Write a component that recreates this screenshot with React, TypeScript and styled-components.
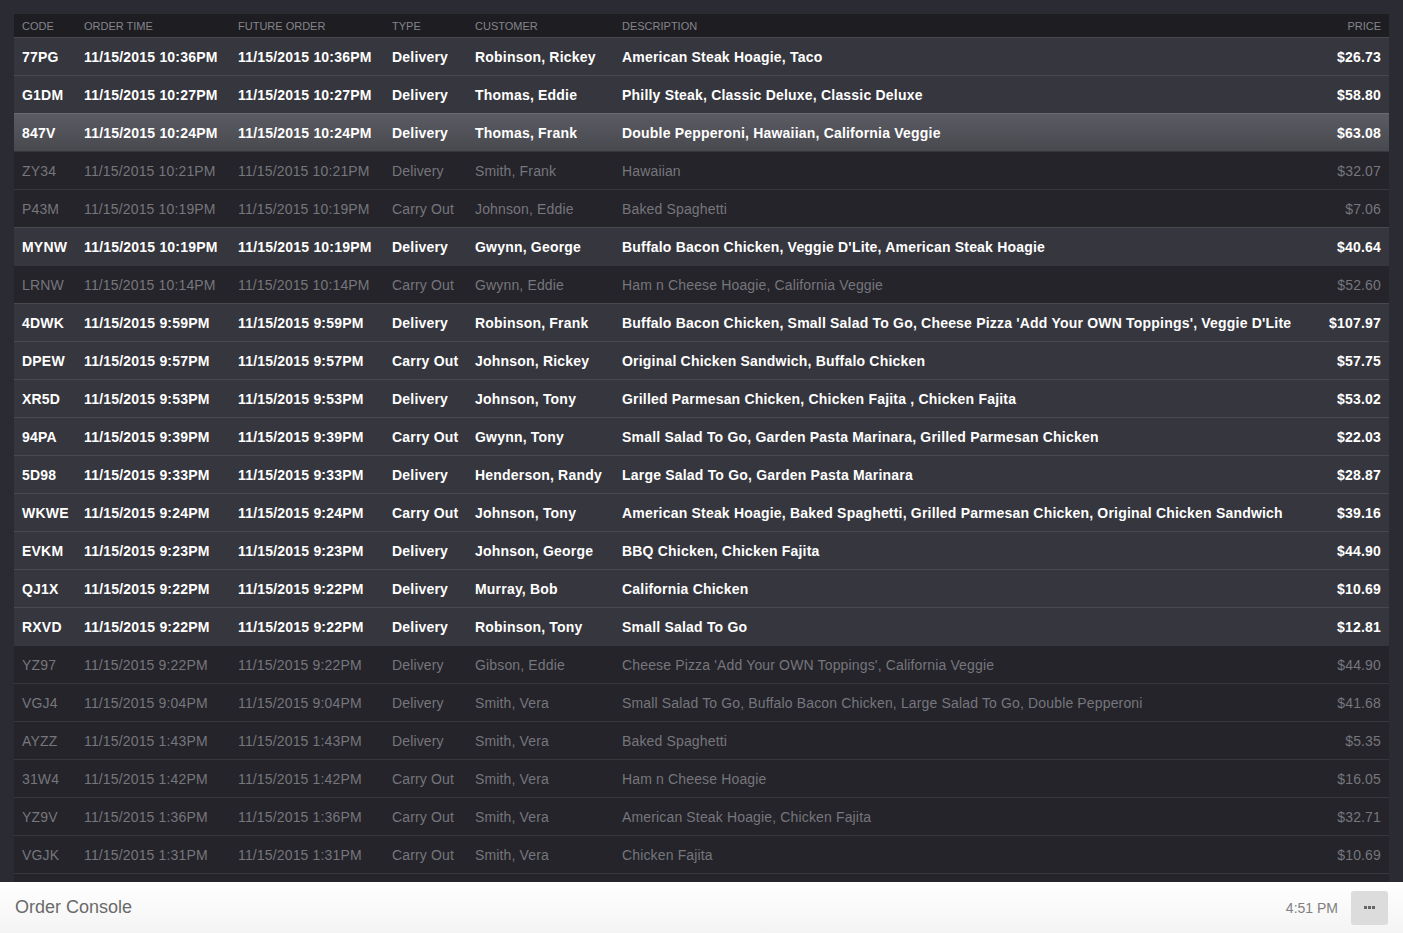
import React from "react";
import styled, { createGlobalStyle, css } from "styled-components";

const GlobalStyle = createGlobalStyle`
  html, body { margin: 0; padding: 0; background: #2b2b33; }
  body { font-family: "Liberation Sans", Arial, sans-serif; }
  * { box-sizing: border-box; }
`;

type Kind = "active" | "dim" | "selected";

interface Order {
  code: string;
  time: string;
  future: string;
  type: string;
  customer: string;
  desc: string;
  price: string;
  kind: Kind;
}

const orders: Order[] = [
  { code: "77PG", time: "11/15/2015 10:36PM", future: "11/15/2015 10:36PM", type: "Delivery", customer: "Robinson, Rickey", desc: "American Steak Hoagie, Taco", price: "$26.73", kind: "active" },
  { code: "G1DM", time: "11/15/2015 10:27PM", future: "11/15/2015 10:27PM", type: "Delivery", customer: "Thomas, Eddie", desc: "Philly Steak, Classic Deluxe, Classic Deluxe", price: "$58.80", kind: "active" },
  { code: "847V", time: "11/15/2015 10:24PM", future: "11/15/2015 10:24PM", type: "Delivery", customer: "Thomas, Frank", desc: "Double Pepperoni, Hawaiian, California Veggie", price: "$63.08", kind: "selected" },
  { code: "ZY34", time: "11/15/2015 10:21PM", future: "11/15/2015 10:21PM", type: "Delivery", customer: "Smith, Frank", desc: "Hawaiian", price: "$32.07", kind: "dim" },
  { code: "P43M", time: "11/15/2015 10:19PM", future: "11/15/2015 10:19PM", type: "Carry Out", customer: "Johnson, Eddie", desc: "Baked Spaghetti", price: "$7.06", kind: "dim" },
  { code: "MYNW", time: "11/15/2015 10:19PM", future: "11/15/2015 10:19PM", type: "Delivery", customer: "Gwynn, George", desc: "Buffalo Bacon Chicken, Veggie D'Lite, American Steak Hoagie", price: "$40.64", kind: "active" },
  { code: "LRNW", time: "11/15/2015 10:14PM", future: "11/15/2015 10:14PM", type: "Carry Out", customer: "Gwynn, Eddie", desc: "Ham n Cheese Hoagie, California Veggie", price: "$52.60", kind: "dim" },
  { code: "4DWK", time: "11/15/2015 9:59PM", future: "11/15/2015 9:59PM", type: "Delivery", customer: "Robinson, Frank", desc: "Buffalo Bacon Chicken, Small Salad To Go, Cheese Pizza 'Add Your OWN Toppings', Veggie D'Lite", price: "$107.97", kind: "active" },
  { code: "DPEW", time: "11/15/2015 9:57PM", future: "11/15/2015 9:57PM", type: "Carry Out", customer: "Johnson, Rickey", desc: "Original Chicken Sandwich, Buffalo Chicken", price: "$57.75", kind: "active" },
  { code: "XR5D", time: "11/15/2015 9:53PM", future: "11/15/2015 9:53PM", type: "Delivery", customer: "Johnson, Tony", desc: "Grilled Parmesan Chicken, Chicken Fajita , Chicken Fajita", price: "$53.02", kind: "active" },
  { code: "94PA", time: "11/15/2015 9:39PM", future: "11/15/2015 9:39PM", type: "Carry Out", customer: "Gwynn, Tony", desc: "Small Salad To Go, Garden Pasta Marinara, Grilled Parmesan Chicken", price: "$22.03", kind: "active" },
  { code: "5D98", time: "11/15/2015 9:33PM", future: "11/15/2015 9:33PM", type: "Delivery", customer: "Henderson, Randy", desc: "Large Salad To Go, Garden Pasta Marinara", price: "$28.87", kind: "active" },
  { code: "WKWE", time: "11/15/2015 9:24PM", future: "11/15/2015 9:24PM", type: "Carry Out", customer: "Johnson, Tony", desc: "American Steak Hoagie, Baked Spaghetti, Grilled Parmesan Chicken, Original Chicken Sandwich", price: "$39.16", kind: "active" },
  { code: "EVKM", time: "11/15/2015 9:23PM", future: "11/15/2015 9:23PM", type: "Delivery", customer: "Johnson, George", desc: "BBQ Chicken, Chicken Fajita", price: "$44.90", kind: "active" },
  { code: "QJ1X", time: "11/15/2015 9:22PM", future: "11/15/2015 9:22PM", type: "Delivery", customer: "Murray, Bob", desc: "California Chicken", price: "$10.69", kind: "active" },
  { code: "RXVD", time: "11/15/2015 9:22PM", future: "11/15/2015 9:22PM", type: "Delivery", customer: "Robinson, Tony", desc: "Small Salad To Go", price: "$12.81", kind: "active" },
  { code: "YZ97", time: "11/15/2015 9:22PM", future: "11/15/2015 9:22PM", type: "Delivery", customer: "Gibson, Eddie", desc: "Cheese Pizza 'Add Your OWN Toppings', California Veggie", price: "$44.90", kind: "dim" },
  { code: "VGJ4", time: "11/15/2015 9:04PM", future: "11/15/2015 9:04PM", type: "Delivery", customer: "Smith, Vera", desc: "Small Salad To Go, Buffalo Bacon Chicken, Large Salad To Go, Double Pepperoni", price: "$41.68", kind: "dim" },
  { code: "AYZZ", time: "11/15/2015 1:43PM", future: "11/15/2015 1:43PM", type: "Delivery", customer: "Smith, Vera", desc: "Baked Spaghetti", price: "$5.35", kind: "dim" },
  { code: "31W4", time: "11/15/2015 1:42PM", future: "11/15/2015 1:42PM", type: "Carry Out", customer: "Smith, Vera", desc: "Ham n Cheese Hoagie", price: "$16.05", kind: "dim" },
  { code: "YZ9V", time: "11/15/2015 1:36PM", future: "11/15/2015 1:36PM", type: "Carry Out", customer: "Smith, Vera", desc: "American Steak Hoagie, Chicken Fajita", price: "$32.71", kind: "dim" },
  { code: "VGJK", time: "11/15/2015 1:31PM", future: "11/15/2015 1:31PM", type: "Carry Out", customer: "Smith, Vera", desc: "Chicken Fajita", price: "$10.69", kind: "dim" },
];

const COLS = "62px 154px 154px 83px 147px 1fr 76px";

const Page = styled.div`
  display: flex;
  flex-direction: column;
  height: 933px;
  overflow: hidden;
`;

const Main = styled.main`
  height: 882px;
  padding: 14px 14px 0;
  display: flex;
  flex-direction: column;
  overflow: hidden;
`;

const Table = styled.div`
  flex: 1;
  display: flex;
  flex-direction: column;
  background: #24242a;
`;

const HeaderRow = styled.div`
  display: grid;
  grid-template-columns: ${COLS};
  height: 23px;
  flex: none;
  align-items: center;
  background: #1d1d22;
`;

const HeadCell = styled.div<{ $right?: boolean }>`
  padding: 0 8px;
  font-size: 11px;
  color: #85858b;
  text-transform: uppercase;
  white-space: nowrap;
  text-align: ${(p) => (p.$right ? "right" : "left")};
`;

const Row = styled.div<{ $kind: Kind }>`
  display: grid;
  grid-template-columns: ${COLS};
  height: 38px;
  flex: none;
  align-items: center;
  border-top: 1px solid #36363d;
  font-size: 14px;
  ${(p) =>
    p.$kind === "active" &&
    css`
      background: #36363e;
      border-top-color: #48484f;
      color: #ffffff;
      font-weight: bold;
      letter-spacing: 0.2px;
    `}
  ${(p) =>
    p.$kind === "selected" &&
    css`
      background: linear-gradient(to bottom, #5b5b63, #48484f);
      border-top-color: #6a6a71;
      color: #ffffff;
      font-weight: bold;
      letter-spacing: 0.2px;
    `}
  ${(p) =>
    p.$kind === "dim" &&
    css`
      background: #24242a;
      border-top-color: #36363c;
      color: #76767c;
      font-weight: normal;
      letter-spacing: 0.15px;
    `}
`;

const Cell = styled.div<{ $right?: boolean }>`
  padding: 0 8px;
  white-space: nowrap;
  overflow: hidden;
  text-align: ${(p) => (p.$right ? "right" : "left")};
`;

const TableEnd = styled.div`
  border-top: 1px solid #36363c;
`;

const Footer = styled.footer`
  height: 51px;
  display: flex;
  align-items: center;
  padding: 0 15px;
  background: linear-gradient(to bottom, #ffffff, #f4f4f4);
`;

const Title = styled.div`
  flex: 1;
  font-size: 18px;
  color: #6a6a6a;
`;

const Clock = styled.div`
  font-size: 14px;
  color: #808080;
  margin-right: 13px;
`;

const MenuButton = styled.button`
  width: 37px;
  height: 34px;
  border: none;
  border-radius: 3px;
  background: #dcdcdc;
  display: flex;
  align-items: center;
  justify-content: center;
  padding: 0;
`;

const Dots = () => (
  <svg width="11" height="3" viewBox="0 0 11 3">
    <rect x="0" y="0" width="3" height="3" fill="#666" />
    <rect x="4" y="0" width="3" height="3" fill="#666" />
    <rect x="8" y="0" width="3" height="3" fill="#666" />
  </svg>
);

export default function App() {
  return (
    <Page>
      <GlobalStyle />
      <Main>
        <Table>
          <HeaderRow>
            <HeadCell>Code</HeadCell>
            <HeadCell>Order Time</HeadCell>
            <HeadCell>Future Order</HeadCell>
            <HeadCell>Type</HeadCell>
            <HeadCell>Customer</HeadCell>
            <HeadCell>Description</HeadCell>
            <HeadCell $right>Price</HeadCell>
          </HeaderRow>
          {orders.map((o) => (
            <Row key={o.code} $kind={o.kind}>
              <Cell>{o.code}</Cell>
              <Cell>{o.time}</Cell>
              <Cell>{o.future}</Cell>
              <Cell>{o.type}</Cell>
              <Cell>{o.customer}</Cell>
              <Cell>{o.desc}</Cell>
              <Cell $right>{o.price}</Cell>
            </Row>
          ))}
          <TableEnd />
        </Table>
      </Main>
      <Footer>
        <Title>Order Console</Title>
        <Clock>4:51 PM</Clock>
        <MenuButton aria-label="More">
          <Dots />
        </MenuButton>
      </Footer>
    </Page>
  );
}
